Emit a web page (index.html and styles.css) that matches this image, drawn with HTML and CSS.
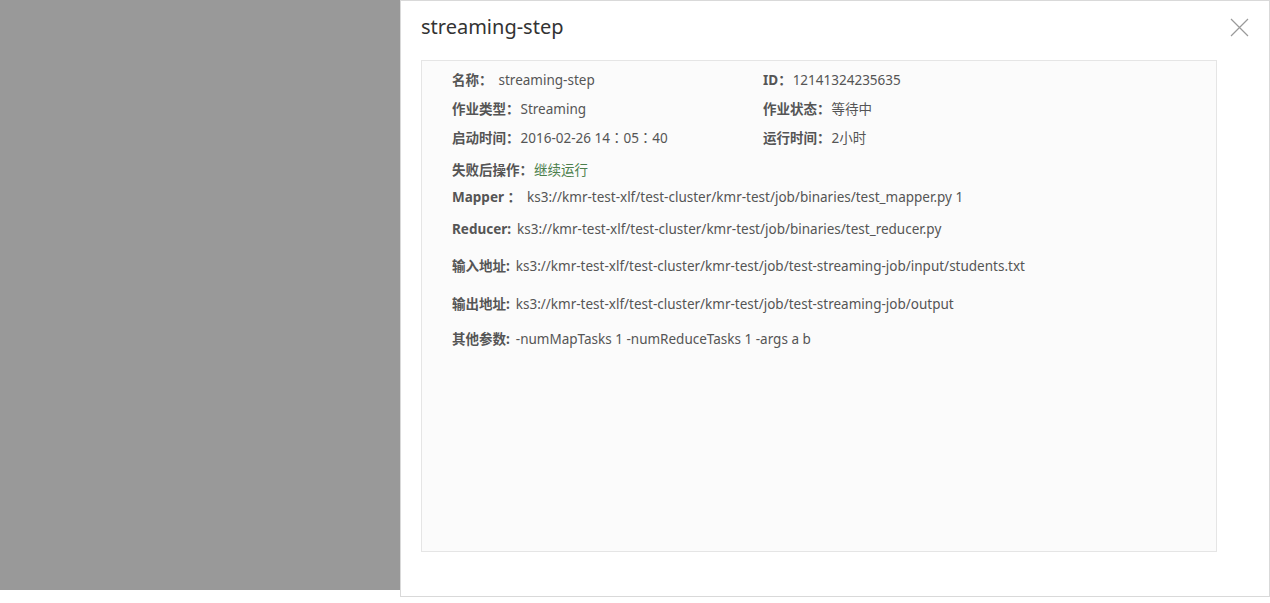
FILE: index.html
```html
<!DOCTYPE html>
<html lang="zh-CN">
<head>
<meta charset="utf-8">
<title>streaming-step</title>
<link rel="stylesheet" href="styles.css">
</head>
<body>
<div class="page">
  <div class="backdrop"></div>
  <section class="drawer">
    <header class="drawer-head">
      <h1 class="drawer-title">streaming-step</h1>
    </header>
    <button class="close" aria-label="关闭">
      <svg width="19" height="19" viewBox="0 0 19 19"><path d="M1 1 L18 18 M18 1 L1 18" stroke="#9a9a9a" stroke-width="1.2" fill="none"/></svg>
    </button>
    <div class="detail">
      <div class="grid">
        <div class="item"><span class="label">名称：</span><span class="value v-name">streaming-step</span></div>
        <div class="item"><span class="label">ID：</span><span class="value">12141324235635</span></div>
        <div class="item"><span class="label">作业类型：</span><span class="value">Streaming</span></div>
        <div class="item"><span class="label">作业状态：</span><span class="value">等待中</span></div>
        <div class="item"><span class="label">启动时间：</span><span class="value">2016-02-26 14：05：40</span></div>
        <div class="item"><span class="label">运行时间：</span><span class="value">2小时</span></div>
      </div>
      <div class="row r-fail"><span class="label">失败后操作：</span><span class="value green">继续运行</span></div>
      <div class="row r-mapper"><span class="label">Mapper ：</span><span class="value">ks3://kmr-test-xlf/test-cluster/kmr-test/job/binaries/test_mapper.py 1</span></div>
      <div class="row r-reducer"><span class="label">Reducer:</span><span class="value">ks3://kmr-test-xlf/test-cluster/kmr-test/job/binaries/test_reducer.py</span></div>
      <div class="row r-input"><span class="label">输入地址:</span><span class="value">ks3://kmr-test-xlf/test-cluster/kmr-test/job/test-streaming-job/input/students.txt</span></div>
      <div class="row r-output"><span class="label">输出地址:</span><span class="value">ks3://kmr-test-xlf/test-cluster/kmr-test/job/test-streaming-job/output</span></div>
      <div class="row r-args"><span class="label">其他参数:</span><span class="value">-numMapTasks 1 -numReduceTasks 1 -args a b</span></div>
    </div>
  </section>
</div>
</body>
</html>
```
FILE: styles.css
```css
* { box-sizing: border-box; }
html, body { margin: 0; padding: 0; background: #fff; }
body {
  font-family: "Noto Sans", "Noto Sans CJK TC", sans-serif;
  color: #555;
  width: 1270px;
  height: 603px;
  overflow: hidden;
}
.page {
  display: flex;
  align-items: flex-start;
}
.backdrop {
  width: 400px;
  height: 590px;
  background: #999;
  flex: none;
}
.drawer {
  position: relative;
  flex: 1;
  height: 597px;
  border: 1px solid #d9d9d9;
  padding: 0 52px 0 20px;
  background: #fff;
}
.drawer-head {
  height: 59px;
  display: flex;
  align-items: center;
  padding-bottom: 8px;
}
.drawer-title {
  margin: 0;
  font-size: 20px;
  font-weight: normal;
  color: #333;
  line-height: 28px;
}
.close {
  position: absolute;
  top: 17px;
  right: 20px;
  width: 19px;
  height: 19px;
  padding: 0;
  border: 0;
  background: transparent;
  display: flex;
}
.detail {
  height: 492px;
  background: #fbfbfb;
  border: 1px solid #e5e5e5;
  padding: 9px 30px 0 30px;
  font-size: 13.5px;
  line-height: 20px;
}
.grid {
  display: grid;
  grid-template-columns: 311px 1fr;
  row-gap: 9px;
}
.item, .row { display: flex; white-space: nowrap; }
.label { font-weight: bold; color: #555; }
.value { color: #555; margin-left: 1px; }
.v-name { margin-left: 6px; }
.green { color: #4c7f4c; }
.row .label { margin-right: 5px; }
.r-fail .label { margin-right: 0; }
.r-fail { margin-top: 12px; }
.r-mapper { margin-top: 7px; }
.r-reducer { margin-top: 12px; }
.r-input { margin-top: 17px; }
.r-output { margin-top: 18px; }
.r-args { margin-top: 15px; }
```
